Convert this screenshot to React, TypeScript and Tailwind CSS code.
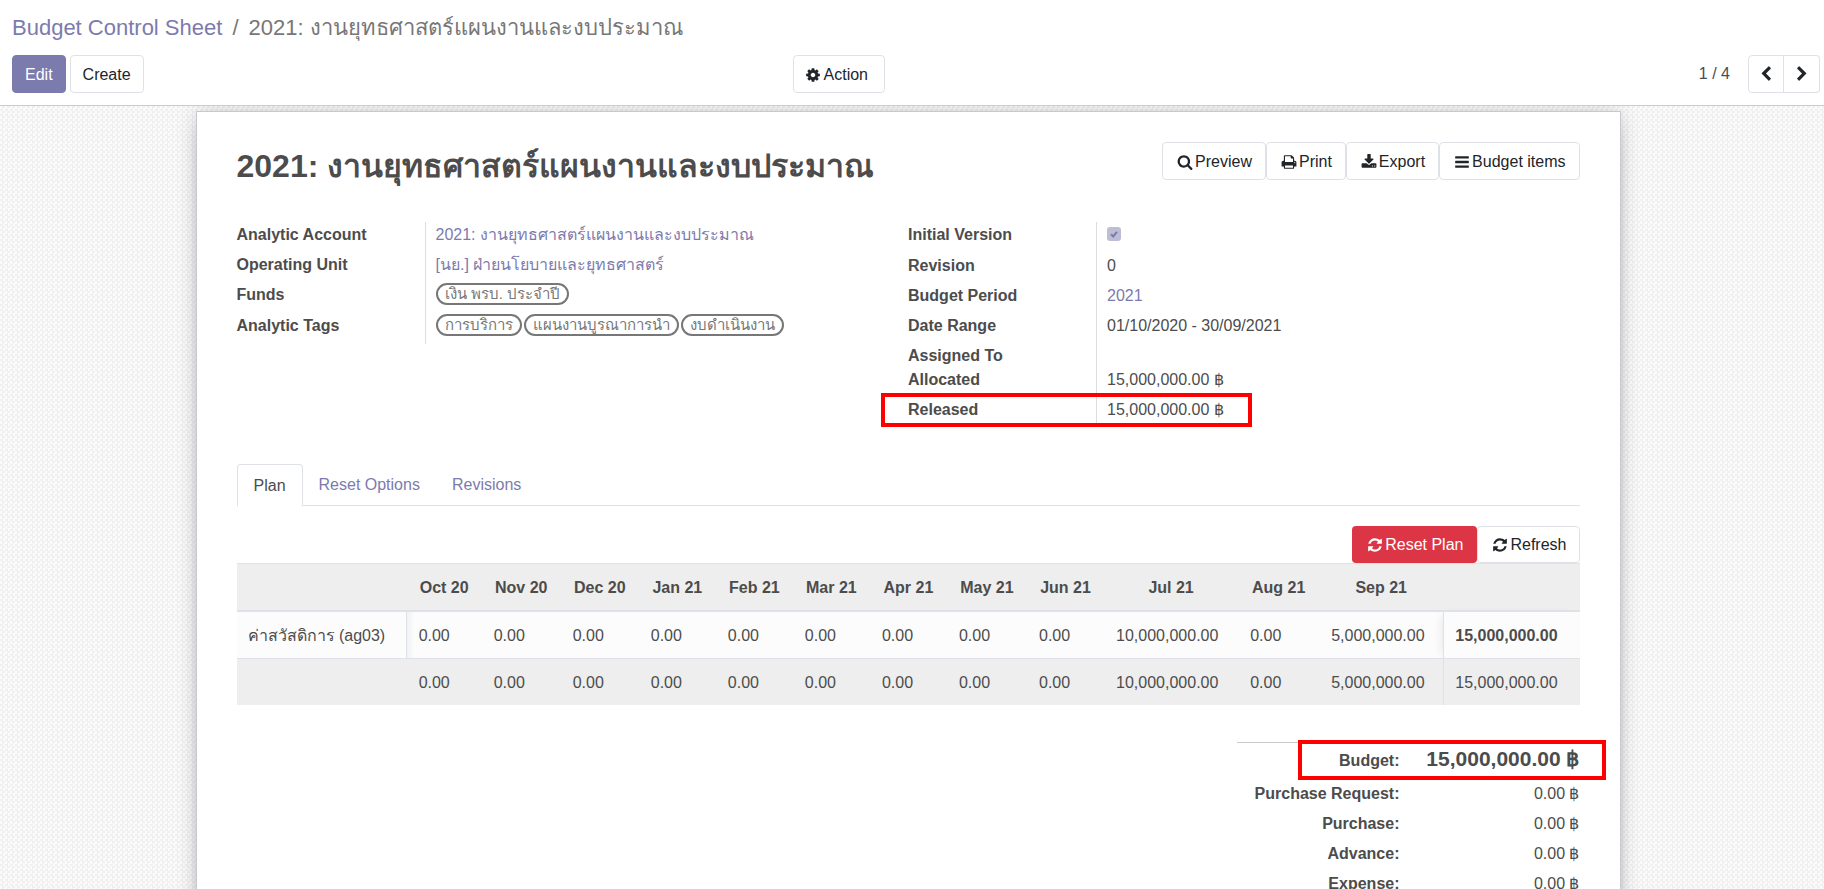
import React from 'react';

const icons = {
  search:
    'M1216 832q0-185-131.5-316.5t-316.5-131.5-316.5 131.5-131.5 316.5 131.5 316.5 316.5 131.5 316.5-131.5 131.5-316.5zm512 832q0 52-38 90t-90 38q-54 0-90-38l-343-342q-179 124-399 124-143 0-273.5-55.5t-225-150-150-225-55.5-273.5 55.5-273.5 150-225 225-150 273.5-55.5 273.5 55.5 225 150 150 225 55.5 273.5q0 220-124 399l343 343q37 37 37 90z',
  refresh:
    'M1639 1056q0 5-1 7-64 268-268 434.5t-478 166.5q-146 0-282.5-55t-243.5-157l-129 129q-19 19-45 19t-45-19-19-45v-448q0-26 19-45t45-19h448q26 0 45 19t19 45-19 45l-137 137q71 66 161 102t187 36q134 0 250-65t186-179q11-17 53-117 8-23 30-23h192q13 0 22.5 9.5t9.5 22.5zm25-800v448q0 26-19 45t-45 19h-448q-26 0-45-19t-19-45 19-45l138-138q-148-137-349-137-134 0-250 65t-186 179q-11 17-53 117-8 23-30 23h-199q-13 0-22.5-9.5t-9.5-22.5v-7q65-268 270-434.5t480-166.5q146 0 284 55.5t245 156.5l130-129q19-19 45-19t45 19 19 45z',
  cog: 'M1152 896q0-106-75-181t-181-75-181 75-75 181 75 181 181 75 181-75 75-181zm512-109v222q0 12-8 23t-20 13l-185 28q-19 54-39 91 35 50 107 138 10 12 10 25t-9 23q-27 37-99 108t-94 71q-12 0-26-9l-138-108q-44 23-91 38-16 136-29 186-7 28-36 28h-222q-14 0-24.5-8.5t-11.5-21.5l-28-184q-49-16-90-37l-141 107q-10 9-25 9-14 0-25-11-126-114-165-168-7-10-7-23 0-12 8-23 15-21 51-66.5t54-70.5q-27-50-41-99l-183-27q-13-2-21-12.5t-8-23.5v-222q0-12 8-23t19-13l186-28q14-46 39-92-40-57-107-138-10-12-10-24 0-10 9-23 26-36 98.5-107.5t94.5-71.5q13 0 26 10l138 107q44-23 91-38 16-136 29-186 7-28 36-28h222q14 0 24.5 8.5t11.5 21.5l28 184q49 16 90 37l142-107q9-9 24-9 13 0 25 10 129 119 165 170 7 8 7 22 0 12-8 23-15 21-51 66.5t-54 70.5q26 50 41 98l183 28q13 2 21 12.5t8 23.5z',
  print:
    'M448 1536h896v-256h-896v256zm0-640h896v-384h-160q-40 0-68-28t-28-68v-160h-640v640zm1152 64q0-26-19-45t-45-19-45 19-19 45 19 45 45 19 45-19 19-45zm128 0v416q0 13-9.5 22.5t-22.5 9.5h-224v160q0 40-28 68t-68 28h-960q-40 0-68-28t-28-68v-160h-224q-13 0-22.5-9.5t-9.5-22.5v-416q0-79 56.5-135.5t135.5-56.5h64v-544q0-40 28-68t68-28h672q40 0 88 20t76 48l152 152q28 28 48 76t20 88v256h64q79 0 135.5 56.5t56.5 135.5z',
  download:
    'M1344 1344q0-26-19-45t-45-19-45 19-19 45 19 45 45 19 45-19 19-45zm256 0q0-26-19-45t-45-19-45 19-19 45 19 45 45 19 45-19 19-45zm128-224v320q0 40-28 68t-68 28h-1472q-40 0-68-28t-28-68v-320q0-40 28-68t68-28h465l135 136q58 56 136 56t136-56l136-136h464q40 0 68 28t28 68zm-325-569q17 41-14 70l-448 448q-18 19-45 19t-45-19l-448-448q-31-29-14-70 17-39 59-39h256v-448q0-26 19-45t45-19h256q26 0 45 19t19 45v448h256q42 0 59 39z',
  bars: 'M1664 1344v128q0 26-19 45t-45 19h-1408q-26 0-45-19t-19-45v-128q0-26 19-45t45-19h1408q26 0 45 19t19 45zm0-512v128q0 26-19 45t-45 19h-1408q-26 0-45-19t-19-45v-128q0-26 19-45t45-19h1408q26 0 45 19t19 45zm0-512v128q0 26-19 45t-45 19h-1408q-26 0-45-19t-19-45v-128q0-26 19-45t45-19h1408q26 0 45 19t19 45z',
  left: 'M1427 301l-531 531 531 531q19 19 19 45t-19 45l-166 166q-19 19-45 19t-45-19l-742-742q-19-19-19-45t19-45l742-742q19-19 45-19t45 19l166 166q19 19 19 45t-19 45z',
  right:
    'M1363 877l-742 742q-19 19-45 19t-45-19l-166-166q-19-19-19-45t19-45l531-531-531-531q-19-19-19-45t19-45l166-166q19-19 45-19t45 19l742 742q19 19 19 45t-19 45z',
};

function Icon({ name }: { name: keyof typeof icons }) {
  return (
    <svg viewBox="0 0 1792 1792" className="size-4 shrink-0 overflow-visible" fill="currentColor" aria-hidden="true">
      <path d={icons[name]} />
    </svg>
  );
}

const button = 'flex h-[38px] items-center rounded border border-[#dee2e6] bg-white pt-px text-[#212529]';

function StatButton({ icon, children }: { icon: keyof typeof icons; children: React.ReactNode }) {
  return (
    <button type="button" className={`${button} gap-[2px] pr-[13px] pl-[14px]`}>
      <Icon name={icon} />
      {children}
    </button>
  );
}

function Field({ label, children }: { label: string; children?: React.ReactNode }) {
  return (
    <div className="flex">
      <dt className={`w-[188px] shrink-0 pt-px font-bold ${children ? 'pb-[5px]' : 'h-6'}`}>{label}</dt>
      <dd className="flex-1 border-l border-[#dddddd] pt-px pl-[10px]">{children}</dd>
    </div>
  );
}

function Tag({ children }: { children: React.ReactNode }) {
  return (
    <span className="flex h-[22px] items-center rounded-full border-2 border-[#777777] px-[7px] text-[15px] text-[#777777]">
      {children}
    </span>
  );
}

const months = [
  'Oct 20', 'Nov 20', 'Dec 20', 'Jan 21', 'Feb 21', 'Mar 21',
  'Apr 21', 'May 21', 'Jun 21', 'Jul 21', 'Aug 21', 'Sep 21',
];
const amounts = [
  '0.00', '0.00', '0.00', '0.00', '0.00', '0.00',
  '0.00', '0.00', '0.00', '10,000,000.00', '0.00', '5,000,000.00',
];
const columnWidths = [
  'w-[170px]', 'w-[75px]', 'w-[79px]', 'w-[78px]', 'w-[77px]', 'w-[77px]', 'w-[77px]',
  'w-[77px]', 'w-[80px]', 'w-[77px]', 'w-[134px]', 'w-[81px]', 'w-[124px]', 'w-[136px]',
];
const totals = ['Purchase Request:', 'Purchase:', 'Advance:', 'Expense:'];

export default function App() {
  return (
    <div className="flex h-screen flex-col overflow-hidden bg-white font-['Liberation_Sans',sans-serif] text-base leading-6 text-[#4c4c4c]">
      <header className="border-b border-[#cccccc] px-3 pt-[13px] pb-3">
        <nav aria-label="Breadcrumb" className="flex h-[30px] items-center gap-[10px] text-[22px] text-[#777777]">
          <a href="#sheets" className="text-[#7c7bad]">Budget Control Sheet</a>
          <span>/</span>
          <span>2021: งานยุทธศาสตร์แผนงานและงบประมาณ</span>
        </nav>
        <div className="mt-3 flex items-center justify-between">
          <div className="flex w-[48.5%] justify-between">
            <div className="flex gap-1">
              <button type="button" className="h-[38px] rounded border border-[#7c7bad] bg-[#7c7bad] px-3 pt-px text-white">Edit</button>
              <button type="button" className={`${button} px-3`}>Create</button>
            </div>
            <button type="button" className={`${button} gap-[3px] pr-4 pl-[11px]`}>
              <Icon name="cog" />
              Action
            </button>
          </div>
          <div className="-mr-2 flex items-center gap-[18px]">
            <span>1 / 4</span>
            <div className="flex">
              <button type="button" aria-label="Previous" className="flex h-[38px] w-9 items-center justify-center rounded-l border border-[#dee2e6] text-[#212529]">
                <Icon name="left" />
              </button>
              <button type="button" aria-label="Next" className="flex h-[38px] w-9 items-center justify-center rounded-r border border-l-0 border-[#dee2e6] text-[#212529]">
                <Icon name="right" />
              </button>
            </div>
          </div>
        </div>
      </header>

      <main className="min-h-0 flex-1 overflow-hidden bg-white bg-[repeating-conic-gradient(#f0f0f0_0_25%,#fbfbfb_0_50%)] bg-size-[5px_5px] pt-[5px] pr-2">
        <article className="mx-auto min-h-full max-w-[1425px] border border-[#c8c8d3] bg-white px-10 pt-[30px] pb-10 shadow-[0_5px_20px_-15px_#000000,0_0_20px_rgba(0,0,0,0.15)]">
          <div className="flex items-start justify-between">
            <h1 className="text-[32px] leading-[48px] font-bold">2021: งานยุทธศาสตร์แผนงานและงบประมาณ</h1>
            <div className="flex">
              <StatButton icon="search">Preview</StatButton>
              <StatButton icon="print">Print</StatButton>
              <StatButton icon="download">Export</StatButton>
              <StatButton icon="bars">Budget items</StatButton>
            </div>
          </div>

          <div className="mt-8 grid grid-cols-2 items-start">
            <dl>
              <Field label="Analytic Account">
                <a href="#account" className="text-[#7c7bad]">2021: งานยุทธศาสตร์แผนงานและงบประมาณ</a>
              </Field>
              <Field label="Operating Unit">
                <a href="#unit" className="text-[#7c7bad]">[นย.] ฝ่ายนโยบายและยุทธศาสตร์</a>
              </Field>
              <Field label="Funds">
                <div className="flex gap-[2px] pb-2"><Tag>เงิน พรบ. ประจำปี</Tag></div>
              </Field>
              <Field label="Analytic Tags">
                <div className="flex gap-[2px] pb-2">
                  <Tag>การบริการ</Tag>
                  <Tag>แผนงานบูรณาการนำ</Tag>
                  <Tag>งบดำเนินงาน</Tag>
                </div>
              </Field>
            </dl>
            <dl>
              <Field label="Initial Version">
                <label className="flex h-[30px] items-start pt-1">
                  <input type="checkbox" checked readOnly disabled aria-label="Initial Version" className="sr-only" />
                  <svg viewBox="0 0 14 14" className="size-[14px]" aria-hidden="true">
                    <rect width="14" height="14" rx="3" fill="#bdbdd6" />
                    <path d="M4 7.2 6.2 9.4 10 4.8" fill="none" stroke="#7c7bad" strokeWidth="2" />
                  </svg>
                </label>
              </Field>
              <Field label="Revision">0</Field>
              <Field label="Budget Period">
                <a href="#period" className="text-[#7c7bad]">2021</a>
              </Field>
              <Field label="Date Range">01/10/2020 - 30/09/2021</Field>
              <Field label="Assigned To" />
              <Field label="Allocated">15,000,000.00 ฿</Field>
              <div className="relative">
                <Field label="Released">15,000,000.00 ฿</Field>
                <div className="absolute -top-1 -left-[27px] h-[34px] w-[371px] border-4 border-[#ff0000]" />
              </div>
            </dl>
          </div>

          <div role="tablist" className="mt-[37px] flex border-b border-[#dee2e6]">
            <button type="button" role="tab" aria-selected="true" className="-mb-px h-[42px] rounded-t border border-b-0 border-[#dee2e6] bg-white px-4">Plan</button>
            <button type="button" role="tab" aria-selected="false" className="px-4 pt-px text-[#7c7bad]">Reset Options</button>
            <button type="button" role="tab" aria-selected="false" className="px-4 pt-px text-[#7c7bad]">Revisions</button>
          </div>

          <div className="mt-5 flex justify-end">
            <button type="button" className="flex h-[37px] items-center gap-[2px] rounded bg-[#dc3545] pr-[14px] pl-[15px] text-white">
              <Icon name="refresh" />
              Reset Plan
            </button>
            <button type="button" className="flex h-[37px] items-center gap-[2px] rounded border border-[#dee2e6] bg-white pr-3 pl-[14px] text-[#212529]">
              <Icon name="refresh" />
              Refresh
            </button>
          </div>

          <table className="w-full table-fixed border-separate border-spacing-0">
            <colgroup>
              {columnWidths.map((width, i) => (
                <col key={i} className={width} />
              ))}
            </colgroup>
            <thead>
              <tr className="h-[49px] bg-[#eeeeee]">
                <th className="border-t border-b-2 border-[#dee2e6]" />
                {months.map((month) => (
                  <th key={month} className="border-t border-b-2 border-[#dee2e6] p-0 pt-[2px] text-center">{month}</th>
                ))}
                <th className="border-t border-b-2 border-[#dee2e6]" />
              </tr>
            </thead>
            <tbody>
              <tr className="h-[47px] bg-[#fcfcfc]">
                <th scope="row" className="border-r border-b border-[#dee2e6] pt-[2px] pl-[11px] text-left font-normal">ค่าสวัสดิการ (ag03)</th>
                {amounts.map((amount, i) => (
                  <td key={i} className="border-b border-[#dee2e6] pt-[2px] pl-3 first-of-type:bg-linear-to-r first-of-type:from-[#f0f2f4] first-of-type:to-[#fcfcfc] first-of-type:to-10%">{amount}</td>
                ))}
                <td className="border-b border-l border-[#dee2e6] pt-[2px] pl-[11px] font-bold shadow-[-5px_0_10px_-5px_#dee2e6]">15,000,000.00</td>
              </tr>
            </tbody>
            <tfoot>
              <tr className="h-[46px] bg-[#eeeeee]">
                <td />
                {amounts.map((amount, i) => (
                  <td key={i} className="pt-[2px] pl-3">{amount}</td>
                ))}
                <td className="border-l border-[#dee2e6] pt-[2px] pl-[11px]">15,000,000.00</td>
              </tr>
            </tfoot>
          </table>

          <dl className="mt-[37px] ml-auto w-[343px] border-t border-[#cccccc]">
            <div className="relative flex h-[39px] items-start pt-1 font-bold">
              <dt className="w-[163px] pt-[2px] text-right">Budget:</dt>
              <dd className="flex-1 text-right text-[21px]">15,000,000.00 ฿</dd>
              <div className="absolute -top-[3px] -right-[26px] h-10 w-[308px] border-4 border-[#ff0000]" />
            </div>
            {totals.map((label) => (
              <div key={label} className="flex pb-[6px]">
                <dt className="w-[163px] text-right font-bold">{label}</dt>
                <dd className="flex-1 text-right">0.00 ฿</dd>
              </div>
            ))}
          </dl>
        </article>
      </main>
    </div>
  );
}
